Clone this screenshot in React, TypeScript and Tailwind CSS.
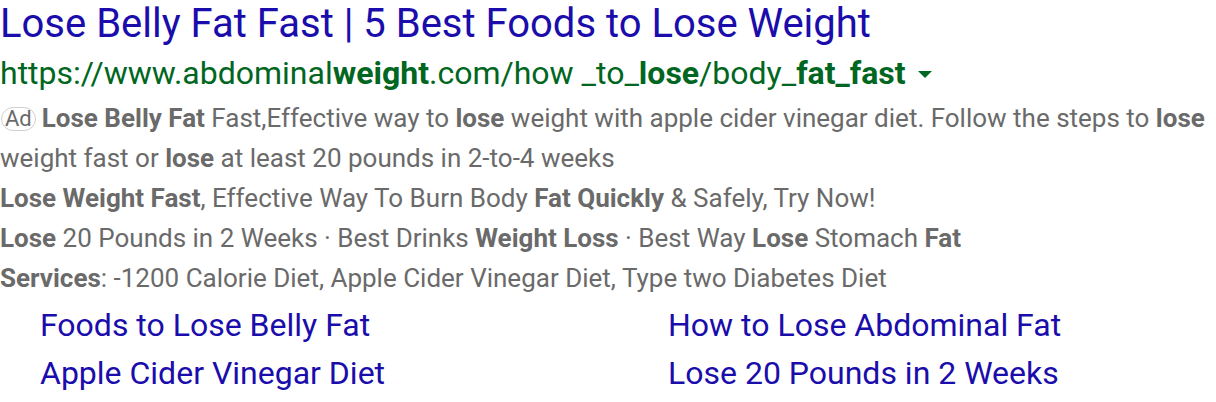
const sitelinks = [
  "Foods to Lose Belly Fat",
  "How to Lose Abdominal Fat",
  "Apple Cider Vinegar Diet",
  "Lose 20 Pounds in 2 Weeks",
];

export default function App() {
  return (
    <div className="w-[1216px] h-[402px] bg-white overflow-hidden font-['Roboto',sans-serif]">
      <div className="text-[40px] leading-[48px] text-[#1a0dab] whitespace-nowrap">
        Lose Belly Fat Fast | 5 Best Foods to Lose Weight
      </div>
      <div className="flex items-center h-[50px] text-[32px] text-[#006621] whitespace-nowrap">
        <span>
          https://www.abdominal<b>weight</b>.com/how _to_<b>lose</b>/body_<b>fat_fast</b>
        </span>
        <svg width="14" height="7" viewBox="0 0 14 7" className="ml-[12px] mt-[2px]">
          <path d="M0 0h14L7 7z" fill="#006621" />
        </svg>
      </div>
      <div className="text-[26px] leading-[40px] text-[#6a6a6a]">
        <p>
          <span className="inline-block border border-[#d0d0d0] rounded-full px-[3px] text-[22px] leading-[22px] mr-[6px] ml-[1px] align-[1px]">
            Ad
          </span>
          <b>Lose Belly Fat</b> Fast,Effective way to <b>lose</b> weight with apple cider vinegar diet. Follow the steps to <b>lose</b> weight fast or <b>lose</b> at least 20 pounds in 2-to-4 weeks
        </p>
        <p>
          <b>Lose Weight Fast</b>, Effective Way To Burn Body <b>Fat Quickly</b> &amp; Safely, Try Now!
        </p>
        <p>
          <b>Lose</b> 20 Pounds in 2 Weeks · Best Drinks <b>Weight Loss</b> · Best Way <b>Lose</b> Stomach <b>Fat</b>
        </p>
        <p>
          <b>Services</b>: -1200 Calorie Diet, Apple Cider Vinegar Diet, Type two Diabetes Diet
        </p>
      </div>
      <div className="grid grid-cols-[628px_1fr] pl-[40px] mt-[3px] text-[32px] leading-[48px] text-[#1a0dab] whitespace-nowrap">
        {sitelinks.map((s) => (
          <a key={s} href="#">
            {s}
          </a>
        ))}
      </div>
    </div>
  );
}
